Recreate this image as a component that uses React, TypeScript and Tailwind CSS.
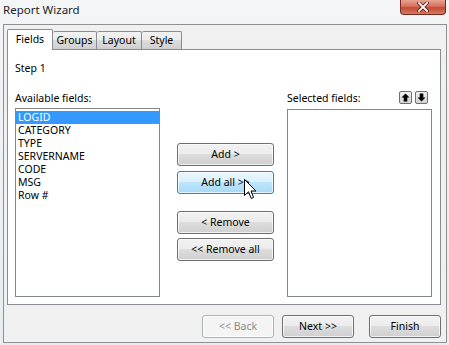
import React from 'react';

const font = { fontFamily: '"Noto Sans", "Open Sans", sans-serif' };

const fields = ['LOGID', 'CATEGORY', 'TYPE', 'SERVERNAME', 'CODE', 'MSG', 'Row #'];

const Btn = ({ label, hot, disabled, className = '' }: { label: string; hot?: boolean; disabled?: boolean; className?: string }) => {
    let look = 'border-[#707070] bg-[linear-gradient(#f2f2f2_0%,#ebebeb_49%,#dddddd_50%,#cfcfcf_100%)] text-black';
    if (hot) look = 'border-[#3c7fb1] bg-[linear-gradient(#eaf6fd_0%,#d9f0fc_49%,#bee6fd_50%,#a7d9f5_100%)] text-black';
    if (disabled) look = 'border-[#adb2b5] bg-[#f4f4f4] text-[#8d8d8d]';
    return (
        <div className={`h-[23px] rounded-[3px] border flex items-center justify-center text-[10.5px] shadow-[inset_0_0_0_1px_rgba(255,255,255,0.7)] ${look} ${className}`}>
            {label}
        </div>
    );
};

const ArrowBtn = ({ down }: { down?: boolean }) => (
    <div className="w-[13px] h-[13px] rounded-[2px] border border-[#707070] bg-[linear-gradient(#f2f2f2,#d4d4d4)] flex items-center justify-center">
        <svg width="9" height="9" viewBox="0 0 9 9" className={down ? 'rotate-180' : ''}>
            <path d="M4.5 0.5 L8.5 4.5 H6.3 V8.5 H2.7 V4.5 H0.5 Z" fill="#000" />
        </svg>
    </div>
);

const Tab = ({ label, active, className = '' }: { label: string; active?: boolean; className?: string }) =>
    active ? (
        <div className={`relative z-10 h-[21px] -mb-px bg-white border-l border-t border-r border-[#898c95] rounded-t-[2px] flex items-start justify-center pt-[2px] ${className}`}>
            {label}
        </div>
    ) : (
        <div className={`h-[18px] border-t border-r border-[#898c95] rounded-t-[2px] bg-[linear-gradient(#f2f2f2_0%,#ebebeb_49%,#dddddd_50%,#cfcfcf_100%)] flex items-center justify-center ${className}`}>
            {label}
        </div>
    );

export default function App() {
    return (
        <div className="relative w-[449px] h-[345px] overflow-hidden bg-[linear-gradient(180deg,#f3f5f7,#e9ecef)] text-black text-[10.5px]" style={font}>
            {/* title bar */}
            <div className="h-[24px] flex items-start">
                <div className="pl-[3px] pt-[2px] text-[11.5px] leading-[16px] text-[#1e1e1e]">Report Wizard</div>
                <div className="ml-auto mr-[3px] w-[46px] h-[15px] rounded-b-[4px] border border-t-0 border-[#7a2c22] bg-[linear-gradient(#e8a493_0%,#d7705d_45%,#c44a34_55%,#d27a62_100%)] flex items-center justify-center">
                    <svg width="12" height="10" viewBox="0 0 12 10">
                        <path d="M2 1 L10 9 M10 1 L2 9" stroke="#5a1a12" strokeWidth="3.4" strokeLinecap="square" />
                        <path d="M2 1 L10 9 M10 1 L2 9" stroke="#ffffff" strokeWidth="1.8" strokeLinecap="square" />
                    </svg>
                </div>
            </div>

            {/* window body */}
            <div className="ml-[3px] w-[444px] h-[319px] border border-[#8e9092] bg-[#f0f0f0] flex flex-col pt-[4px] pl-[3px] pr-[5px] pb-[4px]">
                <div className="h-[20px] flex items-end">
                    <Tab label="Fields" active className="w-[46px]" />
                    <Tab label="Groups" className="w-[44px]" />
                    <Tab label="Layout" className="w-[45px]" />
                    <Tab label="Style" className="w-[40px]" />
                </div>

                <div className="h-[256px] border border-[#898c95] bg-white flex flex-col pt-[11px] pl-[7px] pb-[7px]">
                    <div className="h-[15px] leading-[15px]">Step 1</div>
                    <div className="mt-[15px] flex-1 flex">
                        <div className="w-[145px] flex flex-col">
                            <div className="h-[15px] leading-[15px] mb-[2px]">Available fields:</div>
                            <div className="flex-1 border border-[#828790] bg-white pt-[2px]">
                                {fields.map((f, i) => (
                                    <div
                                        key={f}
                                        className={`h-[13px] leading-[13px] pl-[2px] ${i === 0 ? 'bg-[#3399ff] text-white' : ''}`}
                                    >
                                        {f}
                                    </div>
                                ))}
                            </div>
                        </div>

                        <div className="ml-[17px] w-[97px] flex flex-col pt-[52px]">
                            <Btn label="Add >" />
                            <Btn label="Add all >>" hot className="mt-[5px]" />
                            <Btn label="< Remove" className="mt-[17px]" />
                            <Btn label="<< Remove all" className="mt-[4px]" />
                        </div>

                        <div className="ml-[13px] w-[145px] flex flex-col">
                            <div className="h-[16px] flex items-start">
                                <div className="leading-[15px]">Selected fields:</div>
                                <div className="ml-auto mr-[4px] flex gap-[3px]">
                                    <ArrowBtn />
                                    <ArrowBtn down />
                                </div>
                            </div>
                            <div className="mt-[2px] flex-1 border border-[#828790] bg-white" />
                        </div>
                    </div>
                </div>

                <div className="mt-[10px] flex justify-end">
                    <Btn label="<< Back" disabled className="w-[72px]" />
                    <Btn label="Next >>" className="w-[72px] ml-[8px]" />
                    <Btn label="Finish" className="w-[72px] ml-[15px]" />
                </div>
            </div>

            {/* mouse cursor */}
            <svg className="absolute left-[244px] top-[179px]" width="13" height="21" viewBox="0 0 13 21">
                <path d="M0.5 0.5 V16.5 L4.5 12.8 L7.2 19.5 L9.6 18.5 L7 12 H12 Z" fill="#fff" stroke="#000" strokeWidth="1" strokeLinejoin="miter" />
            </svg>
        </div>
    );
}
